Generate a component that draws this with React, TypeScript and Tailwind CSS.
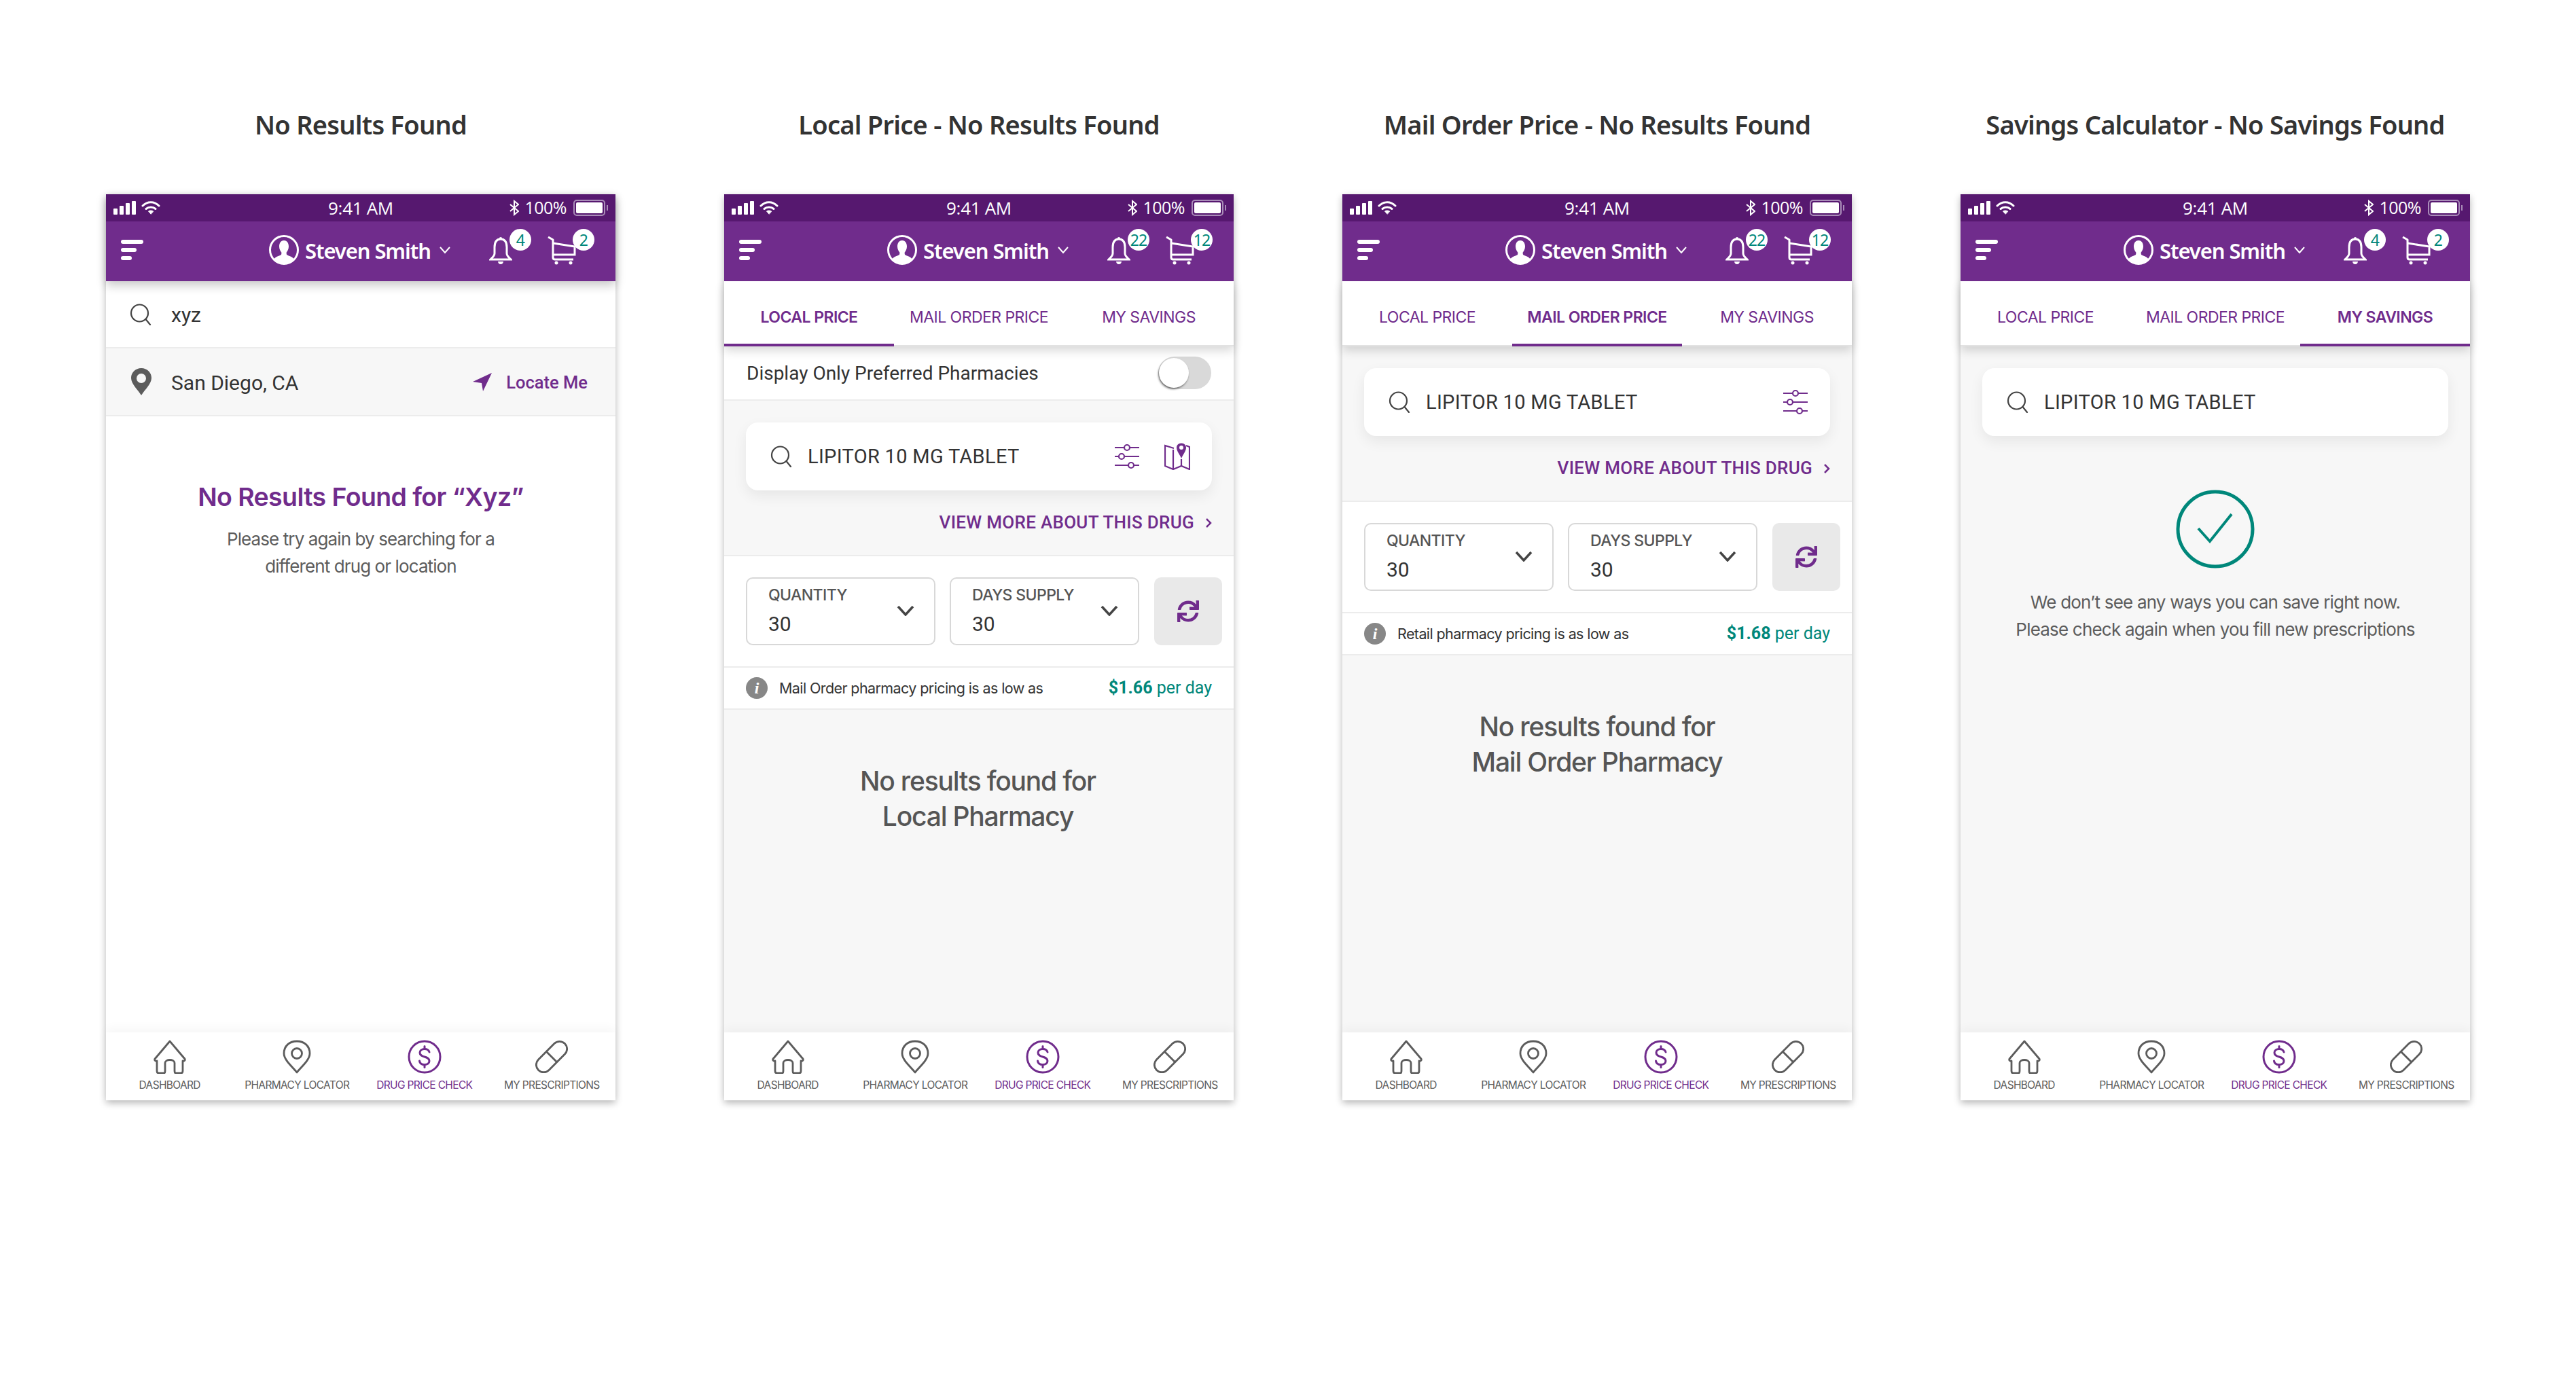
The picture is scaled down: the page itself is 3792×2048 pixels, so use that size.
import { FaSync } from 'react-icons/fa'

const PURPLE = '#702c8c'

// 상태바
function StatusBar() {
  return (
    <div className="h-10 bg-[#56186f] flex items-center justify-between pl-[11px] pr-[11px] text-white font-['Open_Sans',sans-serif] relative">
      <div className="flex items-center gap-[8px]">
        <svg width="33" height="20" viewBox="0 0 33 20" fill="white">
          <rect x="0" y="11" width="6" height="9" rx="1" />
          <rect x="9" y="7" width="6" height="13" rx="1" />
          <rect x="18" y="3" width="6" height="17" rx="1" />
          <rect x="27" y="0" width="6" height="20" rx="1" />
        </svg>
        <svg width="28" height="20" viewBox="0 0 28 20" fill="none" stroke="white" strokeWidth="3" strokeLinecap="round">
          <path d="M2 7 C9 0 19 0 26 7" />
          <path d="M7 11.5 C11 8 17 8 21 11.5" />
          <path d="M14 19 L10.5 15 C12.5 13.6 15.500 13.6 17.500 15 Z" fill="white" strokeWidth="1" />
        </svg>
      </div>
      <div className="absolute left-0 right-0 text-center text-[26px] leading-10 tracking-[-0.3px]">9:41 AM</div>
      <div className="flex items-center">
        <svg width="14" height="24" viewBox="0 0 14 24" fill="none" stroke="white" strokeWidth="2" className="mr-[8px]">
          <path d="M1 7 L13 17 L7 22 V2 L13 7 L1 17" />
        </svg>
        <span className="text-[25px] tracking-[-0.5px] mr-[10px]">100%</span>
        <div className="w-[47px] h-[24px] border-2 border-[#a98cb8] rounded-[5px] p-[2px]">
          <div className="w-full h-full bg-white rounded-[2px]" />
        </div>
        <div className="w-[2px] h-[8px] bg-[#a98cb8] ml-[2px]" />
      </div>
    </div>
  )
}

// 상단 헤더
function AppHeader({ bell, cart, shadow }: { bell: string; cart: string; shadow?: boolean }) {
  return (
    <div className={`relative z-20 ${shadow ? 'shadow-[0_6px_14px_rgba(0,0,0,0.22)]' : ''}`}>
      <StatusBar />
      <div className="h-[88px] bg-[#702c8c] flex items-center pl-[22px] pb-[4px]">
        <div className="flex flex-col gap-[6px] w-[33px]">
          <div className="w-[33px] h-[6px] rounded-full bg-white" />
          <div className="w-[23px] h-[6px] rounded-full bg-white" />
          <div className="w-[16px] h-[6px] rounded-full bg-white" />
        </div>
        <svg width="44" height="44" viewBox="0 0 44 44" className="ml-[185px] shrink-0">
          <circle cx="22" cy="22" r="20.500" fill="none" stroke="white" strokeWidth="3" />
          <path d="M22 8 C27 8 29 12.500 29 17 C29 21 27 24 25.500 26 L26 29 C29.500 31 35 32 37 36 C33 40.500 27.500 42.500 22 42.500 C16.500 42.500 11 40.500 7 36 C9 32 14.500 31 18 29 L18.500 26 C17 24 15 21 15 17 C15 12.500 17 8 22 8 Z" fill="white" />
        </svg>
        <span className="ml-[9px] mt-[3px] text-white text-[31px] font-semibold font-['Noto_Sans',sans-serif] tracking-[-1.100px] whitespace-nowrap w-[182px]">Steven Smith</span>
        <svg width="16" height="12" viewBox="0 0 16 12" fill="none" stroke="white" strokeWidth="2" className="ml-[16px] shrink-0">
          <path d="M1 2 L8 10 L15 2" />
        </svg>
        <div className="relative ml-[57px] mt-[2px] shrink-0 w-[34px] h-[42px]">
          <svg width="34" height="42" viewBox="0 0 34 42" fill="none" stroke="white" strokeWidth="3">
            <path d="M17 4 C10 4 8 10 8 16 V25 C8 29 5 31 2 34 H32 C29 31 26 29 26 25 V16 C26 10 24 4 17 4 Z" />
            <circle cx="17" cy="3" r="2" fill="white" stroke="none" />
            <path d="M13 37 H21 C20.500 40.500 18.500 41 17 41 C15.500 41 13.500 40.500 13 37 Z" fill="white" stroke="none" />
          </svg>
          <Badge value={bell} className="left-[30px] -top-[11px]" />
        </div>
        <div className="relative ml-[52px] mt-[2px] shrink-0 w-[42px] h-[42px]">
          <svg width="42" height="42" viewBox="0 0 42 42" fill="none" stroke="white" strokeWidth="3">
            <path d="M1 1 L8 5 L8 31 C8 33 9 34 11 34 H38" strokeLinejoin="round" />
            <path d="M8 10 L40 15 V27 L8 27" />
            <circle cx="13" cy="39" r="2.500" fill="white" stroke="none" />
            <circle cx="34" cy="39" r="2.500" fill="white" stroke="none" />
          </svg>
          <Badge value={cart} className="left-[37px] -top-[11px]" />
        </div>
      </div>
    </div>
  )
}

function Badge({ value, className }: { value: string; className: string }) {
  return (
    <div className={`absolute w-[32px] h-[32px] rounded-full bg-white flex items-center justify-center text-[#00877a] text-[23px] tracking-[-0.8px] font-['Noto_Sans',sans-serif] ${className}`}>
      {value}
    </div>
  )
}

function SearchIcon({ className }: { className?: string }) {
  return (
    <svg width="32" height="32" viewBox="0 0 32 32" fill="none" stroke="#444" strokeWidth="2.200" className={className}>
      <circle cx="14.500" cy="14" r="12.500" />
      <path d="M23.500 23 L30 31" strokeLinecap="round" />
    </svg>
  )
}

// 탭
function Tabs({ active }: { active: number }) {
  const labels = ['LOCAL PRICE', 'MAIL ORDER PRICE', 'MY SAVINGS']
  return (
    <div className="relative z-10 h-[96px] shrink-0 bg-white grid grid-cols-[250px_250px_250px] shadow-[0_6px_14px_rgba(0,0,0,0.16)] border-b-[2px] border-[#e2e2e2]">
      {labels.map((label, i) => (
        <div
          key={label}
          className={`flex items-center justify-center pt-[14px] text-[23px] tracking-[-0.55px] font-['Inter',sans-serif] text-[#702c8c] border-b-[4px] -mb-[2px] ${i === active ? 'font-semibold border-[#702c8c]' : 'border-transparent'}`}
        >
          {label}
        </div>
      ))}
    </div>
  )
}

function DrugSearch({ tools }: { tools?: 'filter' | 'both' }) {
  return (
    <div className="h-[100px] mx-[32px] bg-white rounded-[18px] shadow-[0_8px_20px_rgba(0,0,0,0.07)] flex items-center pl-[36px] pr-[32px]">
      <SearchIcon />
      <span className="ml-[23px] mt-[2px] text-[29px] text-[#333] tracking-[0.3px] font-['Roboto',sans-serif]">LIPITOR 10 MG TABLET</span>
      <div className="ml-auto flex items-center gap-[36px]">
        {tools && (
          <svg width="38" height="38" viewBox="0 0 38 38" fill="none" stroke={PURPLE} strokeWidth="2.200">
            <path d="M1 6 H15 M23 6 H37 M1 19 H7 M15 19 H37 M1 32 H21 M29 32 H37" />
            <circle cx="19" cy="6" r="4" />
            <circle cx="11" cy="19" r="4" />
            <circle cx="25" cy="32" r="4" />
          </svg>
        )}
        {tools === 'both' && (
          <svg width="38" height="40" viewBox="0 0 38 40" fill="none" stroke={PURPLE} strokeWidth="2.200">
            <path d="M14 8 L1 4 V34 L13 39 L25 34 L37 39 V6 L32 4" />
            <path d="M13 10 V39 M25 24 V34" />
            <path d="M25 0.500 C29.500 0.500 32 3.500 32 7 C32 12 27 18 25 23 C23 18 18 12 18 7 C18 3.500 20.500 0.500 25 0.500 Z" fill={PURPLE} stroke="none" />
            <circle cx="25" cy="7" r="3" fill="white" stroke="none" />
          </svg>
        )}
      </div>
    </div>
  )
}

function SelectBox({ label }: { label: string }) {
  return (
    <div className="w-[279px] h-[100px] border-2 border-[#d8d8d8] rounded-[10px] flex items-center justify-between pl-[31px] pr-[29px]">
      <div className="flex flex-col -mt-[4px]">
        <span className="text-[23px] leading-[28px] font-medium tracking-[-0.6px] text-[#555] font-['Inter',sans-serif]">{label}</span>
        <span className="mt-[14px] text-[30px] leading-[30px] text-[#333] font-['Roboto',sans-serif]">30</span>
      </div>
      <svg width="26" height="16" viewBox="0 0 26 16" fill="none" stroke="#444" strokeWidth="3.500" className="-mt-[2px]">
        <path d="M2 2 L13 14 L24 2" />
      </svg>
    </div>
  )
}

// 수량/공급일 + 가격 안내
function PriceFilters({ note, price }: { note: string; price: string }) {
  return (
    <>
      <div className="h-[166px] bg-white border-y-[2px] border-[#ececec] flex items-center pl-[32px] gap-[21px]">
        <SelectBox label="QUANTITY" />
        <SelectBox label="DAYS SUPPLY" />
        <div className="w-[100px] h-[100px] ml-[1px] bg-[#e9e9e9] rounded-[10px] flex items-center justify-center">
          <FaSync color={PURPLE} size={32} />
        </div>
      </div>
      <div className="h-[62px] bg-white border-b-[2px] border-[#ececec] flex items-center pl-[32px] pr-[32px]">
        <div className="w-[32px] h-[32px] rounded-full bg-[#878787] flex items-center justify-center text-white text-[24px] font-bold italic font-['Liberation_Serif',serif]">i</div>
        <span className="ml-[17px] text-[21.500px] tracking-[-0.6px] text-[#333] font-['Inter',sans-serif]">{note}</span>
        <span className="ml-auto text-[25px] text-[#00877a] font-['Roboto',sans-serif]">
          <b className="font-bold">{price}</b> per day
        </span>
      </div>
    </>
  )
}

function ViewMore() {
  return (
    <div className="h-[63px] mt-[16px] mb-[16px] flex items-center justify-end pr-[32px] text-[26px] font-medium text-[#702c8c] tracking-[0.3px] font-['Roboto',sans-serif]">
      VIEW MORE ABOUT THIS DRUG
      <svg width="10" height="16" viewBox="0 0 10 16" fill="none" stroke={PURPLE} strokeWidth="2.500" className="ml-[16px]">
        <path d="M2 2 L8 8 L2 14" />
      </svg>
    </div>
  )
}

function NoResults({ line1, line2, className }: { line1: string; line2: string; className?: string }) {
  return (
    <div className={`text-center text-[39px] leading-[52px] font-medium tracking-[-1.2px] text-[#555] font-['Inter',sans-serif] ${className}`}>
      {line1}
      <br />
      {line2}
    </div>
  )
}

function BottomNav() {
  const items = [
    {
      label: 'DASHBOARD',
      icon: (
        <svg width="48" height="50" viewBox="0 0 48 50" fill="none" stroke="#5c5c5c" strokeWidth="2.800" strokeLinejoin="round">
          <path d="M24 2 L46 28 C47 30 45 32 43 31 V46 C43 48 42 49 40 49 H33 C31.500 49 31 48 31 46 V34 C31 28 17 28 17 34 V46 C17 48 16.500 49 15 49 H8 C6 49 5 48 5 46 V31 C3 32 1 30 2 28 Z" />
        </svg>
      ),
    },
    {
      label: 'PHARMACY LOCATOR',
      icon: (
        <svg width="42" height="50" viewBox="0 0 42 50" fill="none" stroke="#5c5c5c" strokeWidth="2.800">
          <path d="M21 48 C15 40 2 30 2 20 C2 9 10 2 21 2 C32 2 40 9 40 20 C40 30 27 40 21 48 Z" strokeLinejoin="round" />
          <circle cx="21" cy="20" r="7.500" />
        </svg>
      ),
    },
    {
      label: 'DRUG PRICE CHECK',
      active: true,
      icon: (
        <svg width="50" height="50" viewBox="0 0 50 50" fill="none" stroke={PURPLE} strokeWidth="3">
          <circle cx="25" cy="25" r="23" />
          <path d="M32 18 C31 14 27.500 13.500 25 13.500 C21 13.500 18 15.500 18 19 C18 27 32 23 32 31 C32 34.500 29 36.500 25 36.500 C21 36.500 18 35 17.500 31" strokeLinecap="round" />
          <path d="M25 9.500 V13 M25 37 V40.500" strokeLinecap="round" />
        </svg>
      ),
    },
    {
      label: 'MY PRESCRIPTIONS',
      icon: (
        <svg width="48" height="50" viewBox="0 0 48 50" fill="none" stroke="#5c5c5c" strokeWidth="2.800">
          <g transform="rotate(-45 24 25)">
            <rect x="-3.500" y="14" width="55" height="22" rx="11" />
            <path d="M24 14 V36" />
          </g>
        </svg>
      ),
    },
  ]
  return (
    <div className="relative z-10 h-[100px] shrink-0 bg-white grid grid-cols-4 shadow-[0_-6px_14px_rgba(0,0,0,0.035)]">
      {items.map((item) => (
        <div key={item.label} className="flex flex-col items-center pt-[11px]">
          <div className="h-[50px] flex items-center justify-center">{item.icon}</div>
          <span className={`mt-[7px] text-[15.500px] leading-[20px] tracking-[-0.65px] font-['Inter',sans-serif] whitespace-nowrap ${item.active ? 'text-[#702c8c]' : 'text-[#5c5c5c]'}`}>
            {item.label}
          </span>
        </div>
      ))}
    </div>
  )
}

function Phone({ title, bell, cart, shadow, children }: { title: string; bell: string; cart: string; shadow?: boolean; children: React.ReactNode }) {
  return (
    <div className="w-[750px] shrink-0">
      <div className="h-[54px] mb-[76px] flex items-center justify-center text-[38px] font-semibold tracking-[-0.75px] text-[#333] font-['Noto_Sans',sans-serif] whitespace-nowrap">
        {title}
      </div>
      <div className="h-[1334px] flex flex-col bg-white shadow-[0_4px_10px_rgba(0,0,0,0.28)]">
        <AppHeader bell={bell} cart={cart} shadow={shadow} />
        <div className="flex-1 flex flex-col min-h-0">{children}</div>
        <BottomNav />
      </div>
    </div>
  )
}

export default function App() {
  return (
    <div className="min-h-[2048px] bg-white flex pl-[156px] pt-[156px] gap-[160px] font-['Roboto',sans-serif]">
      <Phone title="No Results Found" bell="4" cart="2" shadow>
        <div className="h-[99px] shrink-0 flex items-center pl-[35px] border-b-[2px] border-[#ececec]">
          <SearchIcon />
          <span className="ml-[29px] mt-[2px] text-[30px] text-[#333]">xyz</span>
        </div>
        <div className="h-[100px] shrink-0 bg-[#f7f7f7] flex items-center pl-[37px] pr-[41px] border-b-[2px] border-[#ececec]">
          <svg width="30" height="40" viewBox="0 0 30 40" fill="#5c5c5c">
            <path fillRule="evenodd" d="M15 0 C23.500 0 30 6.500 30 14.500 C30 23 20 32 15 40 C10 32 0 23 0 14.500 C0 6.500 6.500 0 15 0 Z M15 8 A7 7 0 1 0 15 22 A7 7 0 1 0 15 8 Z" />
          </svg>
          <span className="ml-[29px] mt-[2px] text-[30px] text-[#333]">San Diego, CA</span>
          <svg width="28" height="28" viewBox="0 0 28 28" fill={PURPLE} className="ml-auto">
            <path d="M28 1 L0 14 L13 16 L15 28 Z" />
          </svg>
          <span className="ml-[21px] mt-[2px] text-[25.500px] font-medium text-[#702c8c]">Locate Me</span>
        </div>
        <div className="text-center pt-[97px]">
          <div className="text-[37.500px] leading-[44px] font-semibold tracking-[-0.6px] text-[#702c8c] font-['Inter',sans-serif]">No Results Found for “Xyz”</div>
          <div className="mt-[20px] text-[26px] leading-[40px] tracking-[-0.9px] text-[#5c5c5c] font-['Inter',sans-serif]">
            Please try again by searching for a
            <br />
            different drug or location
          </div>
        </div>
      </Phone>

      <Phone title="Local Price - No Results Found" bell="22" cart="12">
        <Tabs active={0} />
        <div className="h-[80px] shrink-0 bg-white flex items-center justify-between pl-[33px] pr-[33px] border-b-[2px] border-[#ececec]">
          <span className="mt-[1px] text-[28px] text-[#333]">Display Only Preferred Pharmacies</span>
          <div className="w-[78px] h-[48px] rounded-full bg-[#d9d9d9] relative">
            <div className="absolute left-[1px] top-[2px] w-[44px] h-[44px] rounded-full bg-white shadow-[-1px_2px_3px_rgba(0,0,0,0.5)]" />
          </div>
        </div>
        <div className="flex-1 bg-[#f7f7f7] flex flex-col">
          <div className="pt-[32px]">
            <DrugSearch tools="both" />
            <ViewMore />
          </div>
          <PriceFilters note="Mail Order pharmacy pricing is as low as" price="$1.66" />
          <NoResults line1="No results found for" line2="Local Pharmacy" className="mt-[79px] -ml-[3px]" />
        </div>
      </Phone>

      <Phone title="Mail Order Price - No Results Found" bell="22" cart="12">
        <Tabs active={1} />
        <div className="flex-1 bg-[#f7f7f7] flex flex-col">
          <div className="pt-[32px]">
            <DrugSearch tools="filter" />
            <ViewMore />
          </div>
          <PriceFilters note="Retail pharmacy pricing is as low as" price="$1.68" />
          <NoResults line1="No results found for" line2="Mail Order Pharmacy" className="mt-[79px]" />
        </div>
      </Phone>

      <Phone title="Savings Calculator - No Savings Found" bell="4" cart="2">
        <Tabs active={2} />
        <div className="flex-1 bg-[#f7f7f7] flex flex-col">
          <div className="pt-[32px]">
            <DrugSearch />
          </div>
          <div className="flex flex-col items-center mt-[79px]">
            <svg width="116" height="116" viewBox="0 0 116 116" fill="none" stroke="#00877a">
              <circle cx="58" cy="58" r="55" strokeWidth="5" />
              <path d="M33 57 L50 76 L82 36" strokeWidth="4" />
            </svg>
            <div className="mt-[30px] text-center text-[26px] leading-[40px] tracking-[-0.8px] text-[#5c5c5c] font-['Inter',sans-serif]">
              We don’t see any ways you can save right now.
              <br />
              Please check again when you fill new prescriptions
            </div>
          </div>
        </div>
      </Phone>
    </div>
  )
}
